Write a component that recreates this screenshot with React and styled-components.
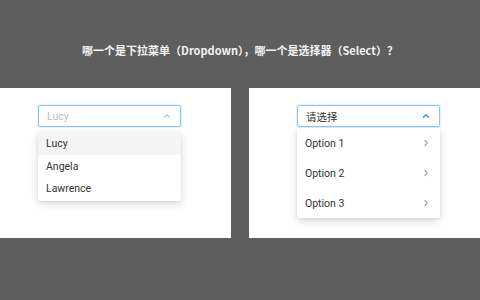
import styled, { createGlobalStyle } from 'styled-components';

const Global = createGlobalStyle`
  html, body { margin: 0; padding: 0; }
  body {
    background: #5e5e5e;
    font-family: Roboto, "Noto Sans", "Noto Sans CJK SC", sans-serif;
  }
`

const Page = styled.div`
  width: 480px;
  height: 300px;
  background: #5e5e5e;
  display: flex;
  flex-direction: column;
`

const Title = styled.h1`
  margin: 0;
  height: 88px;
  box-sizing: border-box;
  padding-top: 43px;
  text-align: center;
  font-family: "Noto Sans CJK SC", sans-serif;
  font-size: 11px;
  line-height: 14px;
  font-weight: 700;
  color: #f2f2f2;
`

const Panels = styled.div`
  display: grid;
  grid-template-columns: 231px 1fr;
  column-gap: 18px;
  height: 150px;
`

const Panel = styled.section`
  background: #fff;
  box-sizing: border-box;
  padding: 17px 0 0 ${({ $left }) => $left}px;
`

const Field = styled.div`
  position: relative;
  width: 143px;
`

const Trigger = styled.div`
  box-sizing: border-box;
  height: 22px;
  padding: 0 9px 0 8px;
  display: flex;
  align-items: center;
  justify-content: space-between;
  border: 1px solid #8cc4ff;
  border-radius: 2px;
  box-shadow: 0 0 0 1px rgba(24, 144, 255, 0.12);
  font-size: 10.5px;
  color: ${({ $placeholder }) => ($placeholder ? '#bdbdbd' : '#333')};
  font-family: Roboto, "Noto Sans CJK SC", sans-serif;
`

const Menu = styled.ul`
  position: absolute;
  left: 0;
  right: 0;
  top: ${({ $top }) => $top}px;
  margin: 0;
  padding: 0 0 ${({ $pb }) => $pb || 0}px;
  list-style: none;
  background: #fff;
  border-radius: 2px;
  box-shadow: 0 3px 8px rgba(0, 0, 0, 0.14), 0 1px 3px rgba(0, 0, 0, 0.08);
`

const Item = styled.li`
  height: ${({ $h }) => $h}px;
  padding: 0 ${({ $pr }) => $pr || 8}px 0 8px;
  display: flex;
  align-items: center;
  justify-content: space-between;
  font-size: 10.5px;
  color: #333;
  background: ${({ $active }) => ($active ? '#f5f5f5' : 'transparent')};
`

const Chevron = ({ dir = 'up', color, width = 1.2 }) => (
  <svg width="8" height="8" viewBox="0 0 8 8">
    <path
      d={dir === 'up' ? 'M1.5 5.2 L4 2.8 L6.5 5.2' : 'M3 1.5 L5.3 4 L3 6.5'}
      fill="none"
      stroke={color}
      strokeWidth={width}
      strokeLinecap="round"
      strokeLinejoin="round"
    />
  </svg>
)

export default function App() {
  return (
    <Page>
      <Global />
      <Title>哪一个是下拉菜单（Dropdown），哪一个是选择器（Select）？</Title>
      <Panels>
        <Panel $left={38}>
          <Field>
            <Trigger $placeholder>
              Lucy
              <Chevron color="#c4c4c4" />
            </Trigger>
            <Menu $top={27} $pb={2}>
              <Item $h={23} $active>Lucy</Item>
              <Item $h={22}>Angela</Item>
              <Item $h={22}>Lawrence</Item>
            </Menu>
          </Field>
        </Panel>
        <Panel $left={48}>
          <Field>
            <Trigger>
              请选择
              <Chevron color="#4a9cf5" width={1.6} />
            </Trigger>
            <Menu $top={23}>
              {['Option 1', 'Option 2', 'Option 3'].map((o) => (
                <Item key={o} $h={30} $pr={10}>
                  {o}
                  <Chevron dir="right" color="#a6a6a6" />
                </Item>
              ))}
            </Menu>
          </Field>
        </Panel>
      </Panels>
    </Page>
  )
}
